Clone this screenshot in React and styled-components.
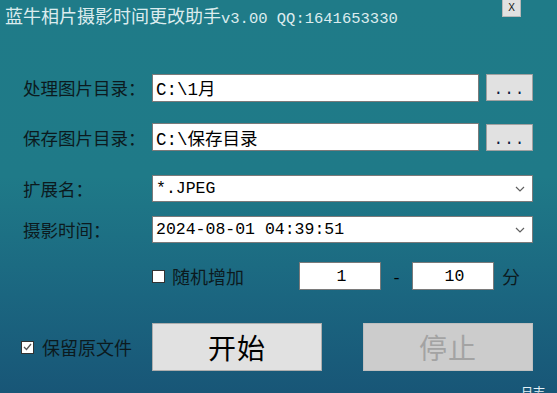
import React from "react";
import styled, { createGlobalStyle } from "styled-components";

const GlobalStyle = createGlobalStyle`
  html, body {
    margin: 0;
    padding: 0;
  }
  body {
    font-family: "Liberation Mono", "Noto Sans CJK SC", monospace;
    overflow: hidden;
  }
`;

const Window = styled.div`
  width: 557px;
  height: 393px;
  overflow: hidden;
  display: flex;
  flex-direction: column;
  background: linear-gradient(180deg, #1f7b88 0%, #1f7a88 45%, #1b6680 75%, #185677 100%);
  color: #0c1a1e;
  & > * {
    flex-shrink: 0;
  }
`;

const TitleBar = styled.div`
  display: flex;
  align-items: flex-start;
  height: 73px;
`;

const Title = styled.div`
  padding: 3px 0 0 5px;
  font-family: "Noto Sans CJK SC", sans-serif;
  font-size: 18px;
  line-height: 24px;
  color: #dcecee;
  white-space: nowrap;
`;

const Latin = styled.span`
  font-family: "Liberation Mono", monospace;
  font-size: 15.5px;
`;

const CloseBtn = styled.div`
  margin-left: auto;
  margin-right: 36px;
  width: 19px;
  height: 17px;
  box-sizing: border-box;
  background: #e1e1e1;
  border: 1px solid #b8b8b8;
  border-top: none;
  font-family: "Liberation Sans", sans-serif;
  font-size: 10px;
  line-height: 16px;
  text-align: center;
  color: #111;
`;

const Row = styled.div`
  display: flex;
  align-items: center;
  flex-shrink: 0;
  height: ${(p) => p.h}px;
  margin-top: ${(p) => p.gap || 0}px;
  padding-left: ${(p) => p.indent || 23}px;
`;

const Label = styled.div`
  width: 129px;
  font-family: "Noto Sans CJK SC", sans-serif;
  font-size: 17.5px;
  white-space: nowrap;
`;

const TextBox = styled.input`
  box-sizing: border-box;
  width: ${(p) => p.w}px;
  height: ${(p) => p.h || 28}px;
  margin: 0;
  padding: 0 0 0 3px;
  border: 1px solid #7a7a7a;
  background: #fff;
  font-family: "Liberation Mono", "Noto Sans CJK SC", monospace;
  font-size: ${(p) => p.fs || 17.5}px;
  color: #000;
  text-align: ${(p) => (p.center ? "center" : "left")};
  outline: none;
`;

const Browse = styled.div`
  box-sizing: border-box;
  width: 47px;
  height: 27px;
  margin-left: 7px;
  background: #e1e1e1;
  border: 1px solid #a0a0a0;
  font-family: "Liberation Mono", monospace;
  font-size: 16px;
  letter-spacing: 1px;
  line-height: 26px;
  padding-top: 2px;
  text-align: center;
  color: #0a1840;
`;

const Combo = styled.div`
  box-sizing: border-box;
  display: flex;
  align-items: center;
  width: 381px;
  height: ${(p) => p.h}px;
  padding: 0 7px 0 3px;
  background: #fff;
  border: 1px solid #7a7a7a;
  font-family: "Liberation Mono", "Noto Sans CJK SC", monospace;
  font-size: ${(p) => p.fs}px;
  color: #000;
  white-space: nowrap;
`;

const ComboText = styled.span`
  flex: 1;
`;

const Chevron = () => (
  <svg width="10" height="6" viewBox="0 0 10 6">
    <path d="M1 1 L5 5 L9 1" fill="none" stroke="#606060" strokeWidth="1.2" />
  </svg>
);

const Check = styled.span`
  box-sizing: border-box;
  display: inline-flex;
  align-items: center;
  justify-content: center;
  flex-shrink: 0;
  width: 13px;
  height: 13px;
  margin-right: ${(p) => p.mr}px;
  background: #fff;
  border: 1px solid #333;
`;

const CheckLabel = styled.span`
  width: ${(p) => p.w}px;
  flex-shrink: 0;
  font-family: "Noto Sans CJK SC", sans-serif;
  font-size: 18px;
  white-space: nowrap;
`;

const Dash = styled.span`
  width: 31px;
  padding-top: 5px;
  text-align: center;
  font-family: "Liberation Mono", monospace;
  font-size: 16px;
  color: #000;
`;

const Unit = styled.span`
  margin-left: 8px;
  font-family: "Noto Sans CJK SC", sans-serif;
  font-size: 18px;
`;

const BigButton = styled.div`
  box-sizing: border-box;
  flex-shrink: 0;
  width: 170px;
  height: 48px;
  margin-left: ${(p) => p.ml || 0}px;
  display: flex;
  align-items: center;
  justify-content: center;
  background: ${(p) => (p.disabled ? "#cccccc" : "#e1e1e1")};
  border: 1px solid ${(p) => (p.disabled ? "#bfbfbf" : "#adadad")};
  color: ${(p) => (p.disabled ? "#a3a3a3" : "#000")};
  font-family: "Noto Sans CJK SC", sans-serif;
  font-size: 28px;
  letter-spacing: 1px;
`;

const Footer = styled.div`
  display: flex;
  justify-content: flex-end;
  padding: 13px 12px 0 0;
  font-family: "Noto Sans CJK SC", sans-serif;
  font-size: 12px;
  line-height: 16px;
  color: #e6f2f8;
`;

export default function App() {
  return (
    <>
      <GlobalStyle />
      <Window>
        <TitleBar>
          <Title>
            蓝牛相片摄影时间更改助手<Latin>v3.00 QQ:1641653330</Latin>
          </Title>
          <CloseBtn>X</CloseBtn>
        </TitleBar>

        <Row h={29}>
          <Label>处理图片目录：</Label>
          <TextBox w={327} h={28} defaultValue="C:\1月" readOnly />
          <Browse>...</Browse>
        </Row>

        <Row h={28} gap={21}>
          <Label>保存图片目录：</Label>
          <TextBox w={327} h={28} defaultValue="C:\保存目录" readOnly />
          <Browse>...</Browse>
        </Row>

        <Row h={27} gap={24}>
          <Label>扩展名：</Label>
          <Combo h={27} fs={16.5}>
            <ComboText>*.JPEG</ComboText>
            <Chevron />
          </Combo>
        </Row>

        <Row h={27} gap={14}>
          <Label>摄影时间：</Label>
          <Combo h={27} fs={16.5}>
            <ComboText>2024-08-01 04:39:51</ComboText>
            <Chevron />
          </Combo>
        </Row>

        <Row h={28} gap={19} indent={152}>
          <Check mr={7} />
          <CheckLabel w={127}>随机增加</CheckLabel>
          <TextBox w={82} h={28} fs={16.5} center defaultValue="1" readOnly />
          <Dash>-</Dash>
          <TextBox w={82} h={28} fs={16.5} center defaultValue="10" readOnly />
          <Unit>分</Unit>
        </Row>

        <Row h={48} gap={33} indent={21}>
          <Check mr={8}>
            <svg width="9" height="8" viewBox="0 0 9 8">
              <path d="M1 4 L3.5 6.5 L8 1" fill="none" stroke="#555" strokeWidth="1.3" />
            </svg>
          </Check>
          <CheckLabel w={110}>保留原文件</CheckLabel>
          <BigButton>开始</BigButton>
          <BigButton ml={41} disabled>停止</BigButton>
        </Row>

        <Footer>日志</Footer>
      </Window>
    </>
  );
}
